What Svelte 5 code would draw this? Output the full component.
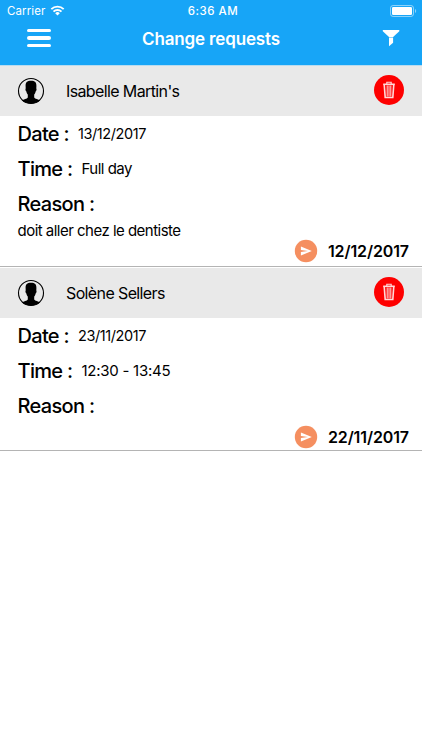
<script>
    let requests = [
        {
            name: "Isabelle Martin's",
            date: "13/12/2017",
            time: "Full day",
            reason: "doit aller chez le dentiste",
            sent: "12/12/2017"
        },
        {
            name: "Solène Sellers",
            date: "23/11/2017",
            time: "12:30 - 13:45",
            reason: "",
            sent: "22/11/2017"
        }
    ];

    function removeRequest(request) {
        requests = requests.filter((r) => r !== request);
    }
</script>

<main>
    <header>
        <div class="status">
            <div class="carrier">
                <span>Carrier</span>
                <svg width="15" height="11" viewBox="0 0 14 11" fill="none" stroke="#fff" stroke-width="1.9">
                    <path d="M0.8 4.2a8.8 8.8 0 0 1 12.4 0" />
                    <path d="M3 6.6a5.7 5.7 0 0 1 8 0" />
                    <path d="M7 10.5 4.7 8.2a3.3 3.3 0 0 1 4.6 0z" fill="#fff" stroke="none" />
                </svg>
            </div>
            <span class="clock">6:36 AM</span>
            <svg class="battery" width="27" height="12" viewBox="0 0 27 12">
                <rect x="0.5" y="0.5" width="23" height="11" rx="2.6" fill="none" stroke="#fff" stroke-opacity="0.5" />
                <rect x="2" y="2" width="20" height="8" rx="1.2" fill="#fff" />
                <path d="M25 4v4c1.6-.6 1.6-3.4 0-4z" fill="#fff" fill-opacity="0.5" />
            </svg>
        </div>
        <div class="navbar">
            <button class="menu" aria-label="Menu">
                <i></i>
                <i></i>
                <i></i>
            </button>
            <h1>Change requests</h1>
            <button class="filter" aria-label="Filter">
                <svg width="18" height="17" viewBox="0 0 18 17" fill="#fff">
                    <path d="M0.8 0h16.5v1.2l-6.2 5.8H7L0.8 1.2z" />
                    <path d="M7 7.500h4.100v5.300L7 16.200z" />
                </svg>
            </button>
        </div>
    </header>

    {#each requests as request}
        <section class:with-reason={request.reason}>
            <div class="person">
                <svg class="avatar" width="28" height="28" viewBox="0 0 28 28">
                    <circle cx="14" cy="14" r="12.5" fill="none" stroke="#000" stroke-width="1.1" />
                    <path d="M14 3.800c-4 0-5.600 1.800-5.400 5.200l.1 2.500c-.6.500-.1 2.500.7 3 .2 1.500.7 2.300 1.400 3v3c-.8 1.500-4 1.800-6 2.800 2.200 2.200 5.500 3.300 9.200 3.300s7-1.100 9.200-3.300c-2-1-5.200-1.300-6-2.800v-3c.7-.7 1.200-1.500 1.400-3 .8-.5 1.300-2.500.7-3l.1-2.500c.2-3.400-1.400-5.200-5.400-5.200z" />
                </svg>
                <span class="name">{request.name}</span>
                <button class="delete" aria-label="Delete" onclick={() => removeRequest(request)}>
                    <svg width="14" height="18" viewBox="0 0 14 18" fill="none" stroke="#ffd9d9">
                        <path d="M1.200 3.300h11.600" stroke-width="1.600" />
                        <path d="M4.800 3V1.200h4.400V3" stroke-width="1.100" />
                        <path d="M2.200 3.500l1 13h7.600l1-13" stroke-width="1.600" />
                        <path d="M5.200 4.500v11M7 4.500v11M8.800 4.500v11" stroke-width="1" />
                    </svg>
                </button>
            </div>
            <div class="row">
                <span class="label">Date :</span>
                <span class="value date">{request.date}</span>
            </div>
            <div class="row">
                <span class="label">Time :</span>
                <span class="value" class:words={request.time === "Full day"}>{request.time}</span>
            </div>
            <div class="row reason">
                <span class="label">Reason :</span>
            </div>
            {#if request.reason}
                <p>{request.reason}</p>
            {/if}
            <div class="sent">
                <svg width="24" height="24" viewBox="0 0 24 24">
                    <circle cx="12" cy="12" r="11.200" fill="#f58f60" />
                    <path d="M6.900 7.400 17.800 12 6.900 16.600V13l7-1-7-1z" fill="#fff" />
                </svg>
                <span>{request.sent}</span>
            </div>
        </section>
    {/each}
</main>

<style>
    :global(body) {
        background: #fff;
    }

    main {
        font-family: Inter, "Liberation Sans", sans-serif;
        color: #000;
    }

    header {
        height: 66px;
        box-sizing: border-box;
        background: #17a5f7;
        border-bottom: 1px solid #b9dcf0;
        color: #fff;
    }

    .status {
        display: grid;
        grid-template-columns: 1fr auto 1fr;
        align-items: center;
        height: 21px;
        padding: 0 5px 0 7px;
        font-size: 11.5px;
    }

    .carrier {
        display: flex;
        align-items: center;
        gap: 5px;
        letter-spacing: 0.1px;
    }

    .clock {
        padding-left: 2px;
        font-weight: 500;
        letter-spacing: 0.5px;
    }

    .battery {
        justify-self: end;
    }

    .navbar {
        display: grid;
        grid-template-columns: 1fr auto 1fr;
        align-items: center;
        height: 34px;
        padding: 0 22px 0 27px;
    }

    button {
        display: flex;
        padding: 0;
        border: 0;
        background: none;
    }

    .menu {
        flex-direction: column;
        gap: 4px;
        width: 24px;
    }

    .menu i {
        width: 24px;
        height: 3.5px;
        border-radius: 2px;
        background: #fff;
    }

    h1 {
        margin: 1px 5px 0 0;
        font-size: 17px;
        font-weight: 600;
        letter-spacing: -0.15px;
    }

    .filter {
        justify-self: end;
    }

    section {
        border-bottom: 1px solid #b4b4b4;
    }

    section.with-reason {
        padding-bottom: 2px;
        margin-bottom: 1px;
    }

    .person {
        display: flex;
        align-items: center;
        height: 50px;
        padding: 0 18px 0 17px;
        background: #e9e9e9;
    }

    .name {
        flex: 1;
        margin-left: 21px;
        font-size: 16px;
        letter-spacing: -0.62px;
    }

    .delete {
        align-items: center;
        justify-content: center;
        width: 30px;
        height: 30px;
        margin-bottom: 2px;
        border-radius: 50%;
        background: #fe0000;
    }

    .row {
        display: flex;
        align-items: center;
        height: 35px;
        padding-left: 17.5px;
    }

    .reason {
        height: 36px;
    }

    .label {
        font-size: 20px;
        font-weight: 500;
        letter-spacing: -0.68px;
    }

    .value {
        margin-left: 9px;
        font-size: 15px;
        letter-spacing: -0.25px;
    }

    .words {
        letter-spacing: -0.5px;
    }

    .date {
        font-size: 14.5px;
        letter-spacing: -0.4px;
    }

    p {
        margin: 0;
        padding-left: 17.5px;
        font-size: 15px;
        line-height: 17px;
        height: 16px;
        letter-spacing: -0.52px;
    }

    .sent {
        display: flex;
        align-items: center;
        justify-content: flex-end;
        gap: 9.5px;
        height: 26px;
        padding-right: 13px;
        font-size: 16px;
        font-weight: 600;
        letter-spacing: -0.1px;
    }
</style>
